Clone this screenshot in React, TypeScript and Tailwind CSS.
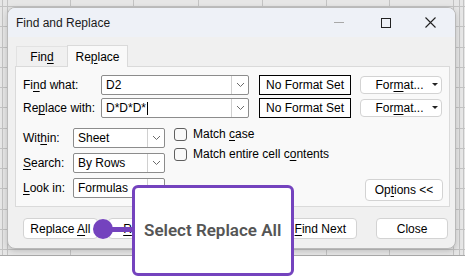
import React from "react";

const U = ({ c }: { c: string }) => <span className="underline underline-offset-2 decoration-1">{c}</span>;

const Chevron = () => (
  <svg width="9" height="6" viewBox="0 0 9 6" className="block">
    <path d="M1 1 L4.5 4.5 L8 1" fill="none" stroke="#6b6b6b" strokeWidth="1" />
  </svg>
);

const Combo = ({ value, w, caret }: { value: string; w: string; caret?: boolean }) => (
  <div className={`${w} h-[20px] flex bg-white border border-[#8c8c8c] rounded-[2px]`}>
    <div className="flex-1 flex items-center pl-[4px] text-[12px] text-black">
      <span>{value}</span>
      {caret && <span className="inline-block w-px h-[13px] bg-black ml-[1px]" />}
    </div>
    <div className="w-[17px] border-l border-[#d0d0d0] flex items-center justify-center">
      <Chevron />
    </div>
  </div>
);

const Btn = ({ children, w, cls = "" }: { children: React.ReactNode; w: string; cls?: string }) => (
  <div className={`${w} h-[21px] flex items-center justify-center bg-white border border-[#d3d3d3] rounded-[4px] text-[12px] text-black ${cls}`}>
    <span>{children}</span>
  </div>
);

const FormatBtn = () => (
  <div className="w-[82px] h-[18px] flex items-center bg-white border border-[#d3d3d3] rounded-[4px] text-[12px] text-black">
    <span className="flex-1 text-center pl-[6px]">
      For<U c="m" />at...
    </span>
    <svg width="6" height="4" viewBox="0 0 6 4" className="mr-[3px]">
      <path d="M0 0 L6 0 L3 3 Z" fill="#222" />
    </svg>
  </div>
);

const Check = ({ children }: { children: React.ReactNode }) => (
  <div className="h-[20px] flex items-center gap-[6px]">
    <div className="w-[13px] h-[13px] border border-[#5f5f5f] rounded-[3px] bg-[#f9f9f9]" />
    <span className="text-[12px] text-black">{children}</span>
  </div>
);

function GridBg() {
  const vs = [2, 7, 70, 133, 198, 262, 326, 389, 453, 459, 463];
  const hs: number[] = [];
  for (let i = 0; i <= 12; i++) hs.push(6 + i * 20.25);
  return (
    <svg width="465" height="256" className="absolute left-0 top-0">
      <rect x="0" y="0" width="465" height="256" fill="#e6e6e6" />
      {vs.map((x) => (
        <line key={"v" + x} x1={x + 0.5} y1="0" x2={x + 0.5} y2="256" stroke="#c3c3c3" strokeWidth="1" />
      ))}
      {hs.map((y) => (
        <line key={"h" + y} x1="0" y1={Math.round(y) + 0.5} x2="465" y2={Math.round(y) + 0.5} stroke="#c3c3c3" strokeWidth="1" />
      ))}
      <line x1="0" y1="255.5" x2="465" y2="255.5" stroke="#a9a9a9" strokeWidth="1" />
    </svg>
  );
}

export default function App() {
  return (
    <div
      className="relative w-[465px] h-[279px] bg-white overflow-hidden"
      style={{ fontFamily: '"Liberation Sans", Arial, sans-serif' }}
    >
      <GridBg />
      {/* Dialog window */}
      <div className="absolute left-[7px] top-[7px] w-[449px] h-[242px] border border-[#b9b9b9] rounded-[8px] bg-[#f0f0f0] shadow-[0_2px_6px_rgba(0,0,0,0.18)] overflow-hidden">
        <div className="h-[29px] bg-[#eef1f7] flex items-center pl-[8px]">
          <span className="text-[12px] text-[#1a1a1a] flex-1">Find and Replace</span>
          <div className="w-[45px] flex justify-center mr-[2px]">
            <div className="w-[10px] h-px bg-[#a8a8a8]" />
          </div>
          <div className="w-[45px] flex justify-center">
            <div className="w-[10px] h-[10px] border border-[#222]" />
          </div>
          <div className="w-[45px] flex justify-center mr-[2px]">
            <svg width="11" height="11" viewBox="0 0 11 11">
              <path d="M0.5 0.5 L10.5 10.5 M10.5 0.5 L0.5 10.5" stroke="#222" strokeWidth="1.1" />
            </svg>
          </div>
        </div>
        <div className="px-[7px]">
          {/* Tabs */}
          <div className="flex mt-[7px] h-[22px] items-end">
            <div className="w-[51px] h-[20px] ml-[1px] flex items-center justify-center text-[12px] text-black border-t border-l border-[#e2e2e2]">
              <span>
                Fin<U c="d" />
              </span>
            </div>
            <div className="w-[61px] h-[22px] flex items-center justify-center text-[12px] text-black bg-[#f9f9f9] border-t border-l border-r border-[#dadada] relative top-[1px]">
              <span>
                Re<U c="p" />lace
              </span>
            </div>
          </div>
          {/* Panel */}
          <div className="w-[435px] h-[141px] border border-[#dadada] bg-[#f9f9f9] pl-[7px] pr-[6px] pt-[8px]">
            <div className="flex items-center h-[20px]">
              <div className="w-[78px] text-[12px] text-black">
                Fi<U c="n" />d what:
              </div>
              <Combo value="D2" w="w-[148px]" />
              <div className="ml-[10px] w-[92px] h-[20px] border border-black bg-white flex items-center justify-center text-[12px] text-black">
                No Format Set
              </div>
              <div className="ml-[9px]">
                <FormatBtn />
              </div>
            </div>
            <div className="flex items-center h-[20px] mt-[3px]">
              <div className="w-[78px] text-[12px] text-black">
                Re<U c="p" />lace with:
              </div>
              <Combo value="D*D*D*" w="w-[148px]" caret />
              <div className="ml-[10px] w-[92px] h-[20px] border border-black bg-white flex items-center justify-center text-[12px] text-black">
                No Format Set
              </div>
              <div className="ml-[9px]">
                <FormatBtn />
              </div>
            </div>
            <div className="flex mt-[8px]">
              <div className="flex flex-col gap-[5px] pt-[2px]">
                {[
                  [<>Wit<U c="h" />in:</>, "Sheet"],
                  [<><U c="S" />earch:</>, "By Rows"],
                  [<><U c="L" />ook in:</>, "Formulas"],
                ].map(([l, v], i) => (
                  <div key={i} className="flex items-center h-[20px]">
                    <div className="w-[50px] text-[12px] text-black">{l}</div>
                    <Combo value={v as string} w="w-[92px]" />
                  </div>
                ))}
              </div>
              <div className="ml-[9px] flex flex-col -mt-[2px]">
                <Check>
                  Match <U c="c" />ase
                </Check>
                <Check>
                  Match entire cell c<U c="o" />ntents
                </Check>
              </div>
              <div className="flex-1 flex items-end justify-end">
                <div className="w-[78px] h-[22px] flex items-center justify-center bg-white border border-[#d3d3d3] rounded-[4px] text-[12px] text-black mb-[-3px]">
                  <span>
                    Op<U c="t" />ions &lt;&lt;
                  </span>
                </div>
              </div>
            </div>
          </div>
          {/* Bottom buttons */}
          <div className="flex mt-[11px] pl-[8px]">
            <Btn w="w-[75px]">
              Replace <U c="A" />ll
            </Btn>
            <Btn w="w-[75px]" cls="ml-[10px]">
              <U c="R" />eplace
            </Btn>
            <Btn w="w-[75px]" cls="ml-[10px]">
              {""}
            </Btn>
            <Btn w="w-[74px]" cls="ml-[16px] border-[#0067c0] border-[1.5px]">
              <U c="F" />ind Next
            </Btn>
            <Btn w="w-[72px]" cls="ml-[19px]">
              Close
            </Btn>
          </div>
        </div>
      </div>
      {/* Callout */}
      <div className="absolute left-[93px] top-[219px] w-[20px] h-[20px] rounded-full bg-[#7443be]" />
      <div className="absolute left-[103px] top-[227px] w-[32px] h-[5px] bg-[#7443be]" />
      <div className="absolute left-[132px] top-[185px] w-[162px] h-[91px] border-[3px] border-[#7443be] rounded-[6px] bg-white flex items-center pl-[9px]">
        <span
          className="text-[17px] font-semibold text-[#555555]"
          style={{ fontFamily: "Roboto, 'Noto Sans', sans-serif" }}
        >
          Select Replace All
        </span>
      </div>
    </div>
  );
}
